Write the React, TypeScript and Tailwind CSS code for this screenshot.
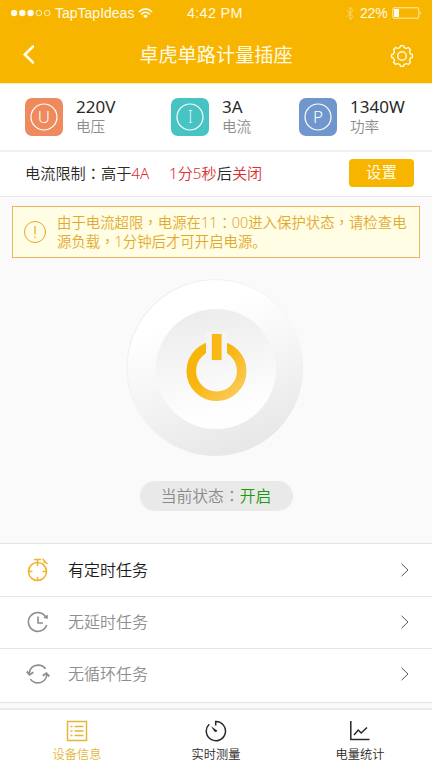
import React from 'react';

interface StatProps {
  letter: string;
  value: string;
  label: string;
  color: string;
  className: string;
}

const Mark: React.FC<{ children: string }> = ({ children }) => (
  <span className="font-['Noto_Sans_CJK_TC',sans-serif]" lang="zh-TW">{children}</span>
);

const StatusBar = () => (
  <div className="flex h-6 items-center pl-[11px] pr-[10px] pt-[2px] font-['Liberation_Sans',sans-serif] text-[#fffbe8]">
    <svg className="h-2 w-10" viewBox="0 0 40 8" fill="none">
      <circle cx="3" cy="4" r="3.2" fill="currentColor" />
      <circle cx="11.3" cy="4" r="3.2" fill="currentColor" />
      <circle cx="19.6" cy="4" r="3.2" fill="currentColor" />
      <circle cx="27.9" cy="4" r="2.8" stroke="currentColor" strokeWidth="0.8" />
      <circle cx="36.2" cy="4" r="2.8" stroke="currentColor" strokeWidth="0.8" />
    </svg>
    <span className="ml-[4px] w-[81px] whitespace-nowrap text-[14px] leading-5">TapTapIdeas</span>
    <svg className="ml-[2px] h-[11px] w-[15px]" viewBox="0 0 15 11" fill="none" stroke="currentColor" strokeWidth="1.5">
      <path d="M.8 4Q7.5-2.3 14.2 4M3.1 6.4Q7.5 2.2 11.9 6.4" />
      <path d="M7.5 10.3 5.1 7.9Q7.5 5.8 9.9 7.9Z" fill="currentColor" stroke="none" />
    </svg>
    <span className="ml-[34px] whitespace-nowrap text-[14.4px] leading-5 tracking-[0.3px]">4:42 PM</span>
    <div className="ml-auto flex items-center">
      <svg className="h-[15px] w-2 opacity-50" viewBox="0 0 8 15" fill="none" stroke="currentColor">
        <path d="M.5 4 7 10.5 4 13.8V1.2L7 4.5.5 11" />
      </svg>
      <span className="ml-[6px] w-[32px] whitespace-nowrap text-[14px] leading-5 tracking-[-0.2px]">22%</span>
      <svg className="h-3 w-[30px]" viewBox="0 0 30 12" fill="none">
        <rect x=".8" y=".8" width="26" height="10.4" rx="1" stroke="currentColor" strokeWidth=".8" />
        <rect x="2" y="2" width="5" height="8" fill="currentColor" />
        <path d="M28 4.2q1.8 1.8 0 3.6z" fill="currentColor" />
      </svg>
    </div>
  </div>
);

const Gear = () => (
  <svg className="h-6 w-6" viewBox="0 0 24 24" fill="none" stroke="currentColor" strokeWidth="1.4" strokeLinejoin="round">
    <path d="M9.7 3.6c.5-.2.6-1 .8-2h3c.2 1 .3 1.8.8 2 .8.3 1.3.5 2 .8.5.2 1.2-.3 2-.9l2.2 2.2c-.6.8-1.1 1.5-.9 2 .3.7.5 1.2.8 2 .2.5 1 .6 2 .8v3c-1 .2-1.8.3-2 .8-.3.8-.5 1.3-.8 2-.2.5.3 1.2.9 2l-2.2 2.2c-.8-.6-1.5-1.1-2-.9-.7.3-1.2.5-2 .8-.5.2-.6 1-.8 2h-3c-.2-1-.3-1.8-.8-2-.8-.3-1.3-.5-2-.8-.5-.2-1.2.3-2 .9l-2.2-2.2c.6-.8 1.1-1.5.9-2-.3-.7-.5-1.2-.8-2-.2-.5-1-.6-2-.8v-3c1-.2 1.8-.3 2-.8.3-.8.5-1.3.8-2 .2-.5-.3-1.2-.9-2l2.2-2.2c.8.6 1.5 1.1 2 .9.7-.3 1.2-.5 2-.8Z" />
    <circle cx="12" cy="12" r="4.3" />
  </svg>
);

const Stat: React.FC<StatProps> = ({ letter, value, label, color, className }) => (
  <div className={`flex items-center ${className}`}>
    <div className={`flex h-[38px] w-[38px] items-center justify-center rounded-[7px] text-white ${color}`}>
      <svg className="h-7 w-7" viewBox="0 0 28 28" fill="none" stroke="currentColor">
        <circle cx="14" cy="14" r="13" strokeWidth="1.2" />
        {letter === 'I' ? (
          <text x="14.5" y="20" textAnchor="middle" fill="currentColor" stroke="none" className="font-['Noto_Sans',sans-serif] text-[18px] font-extralight">
            I
          </text>
        ) : (
          <text x="14" y="20" textAnchor="middle" fill="currentColor" stroke="none" className="font-['Noto_Sans',sans-serif] text-[17px] font-light">
            {letter}
          </text>
        )}
      </svg>
    </div>
    <div className="-mt-[2px] ml-[13px] whitespace-nowrap">
      <div className="text-[17px] leading-5 font-normal text-[#2a2a2a]">{value}</div>
      <div className="text-[14.6px] leading-[18px] text-[#8c8c8c]">{label}</div>
    </div>
  </div>
);

const PowerButton = () => (
  <svg className="h-[182px] w-[182px]" viewBox="0 0 182 182" fill="none">
    <defs>
      <linearGradient id="rim" x1="0.32" y1="0" x2="0.68" y2="1">
        <stop offset="0.2" stopColor="#ffffff" />
        <stop offset="1" stopColor="#e6e6e6" />
      </linearGradient>
      <linearGradient id="face" x1="0.4" y1="0" x2="0.6" y2="1">
        <stop offset="0" stopColor="#ececec" />
        <stop offset="0.85" stopColor="#fefefe" />
      </linearGradient>
      <linearGradient id="edge" x1="0" y1="0" x2="1" y2="1">
        <stop offset="0" stopColor="#ececec" />
        <stop offset="1" stopColor="#ffffff" />
      </linearGradient>
      <linearGradient id="gold" x1="0" y1="0" x2="1" y2="1">
        <stop offset="0.4" stopColor="#f8b50c" />
        <stop offset="1" stopColor="#fbcd60" />
      </linearGradient>
    </defs>
    <circle cx="90.5" cy="91" r="88.5" fill="url(#rim)" stroke="url(#edge)" strokeWidth="1.2" />
    <circle cx="91" cy="92" r="60" fill="url(#face)" />
    <circle cx="91.5" cy="94" r="25.2" stroke="url(#gold)" strokeWidth="9.6" />
    <path d="M81 55h21v32H81z" fill="#f4f4f4" />
    <path d="M86.8 57h9.8v26h-9.8z" fill="#f9b816" />
  </svg>
);

const TimerIcon = () => (
  <svg className="h-6 w-6 text-[#f1b42f]" viewBox="0 0 24 24" fill="none" stroke="currentColor" strokeWidth="1.6">
    <circle cx="11.5" cy="13.5" r="9" />
    <path d="M8 1.5h7M11.5 2v6M16.5 1l5 5M19.5 3l-2 2M11.500 19v4M2.500 13.500h4M16.500 13.500h4" />
  </svg>
);

const DelayIcon = () => (
  <svg className="h-6 w-6" viewBox="0 0 24 24" fill="none" stroke="currentColor" strokeWidth="1.6">
    <path d="M19.6 6.7A9.4 9.4 0 1 0 20.7 15M12 6.5V13h5" />
    <path d="m21.7 4.5.2 4.2-4.7-.8z" fill="currentColor" stroke="none" />
  </svg>
);

const LoopIcon = () => (
  <svg className="h-6 w-6" viewBox="0 0 24 24" fill="none" stroke="currentColor" strokeWidth="1.6">
    <path d="M3.2 11.5C3.5 6.5 7 3.1 12 3.1c3.3 0 5.9 1.3 7.6 3.8M20.8 12.5c-.3 4.8-3.9 8.4-8.8 8.4-3.3 0-5.9-1.3-7.6-3.8" />
    <path d="m.8 9.5 2.8 3.2 3.7-2.4M23.2 14.5l-2.800-3.200-3.700 2.400" strokeWidth="1.9" />
  </svg>
);

const tasks = [
  { label: '有定时任务', icon: <TimerIcon />, row: 'h-[53px] border-t border-[#e4e4e4] text-[#1b1b1b]' },
  { label: '无延时任务', icon: <DelayIcon />, row: 'h-[52px] border-t border-[#e4e4e4] text-[#8e8e8e] pb-[2px]' },
  { label: '无循环任务', icon: <LoopIcon />, row: 'h-[55px] border-y border-[#e4e4e4] text-[#8e8e8e] pb-[4px]' },
];

const tabs = [
  {
    label: '设备信息',
    tab: 'text-[#e3b637] pl-[10px]',
    icon: (
      <svg className="h-[22px] w-[22px]" viewBox="0 0 22 22" fill="none" stroke="currentColor" strokeWidth="1.5">
        <path d="M1.5 1.5h19v19h-19zM4.5 6.5h2M8.5 6.5h9M4.5 11h2M8.5 11h9M4.5 15.5h2M8.5 15.5h9" />
      </svg>
    ),
  },
  {
    label: '实时测量',
    tab: 'text-[#292929]',
    icon: (
      <svg className="h-[22px] w-[22px]" viewBox="0 0 22 22" fill="none" stroke="currentColor" strokeWidth="1.5">
        <path d="M10.7 5.5v-4A9.6 9.6 0 1 1 4.2 4.2" />
        <path d="m6 6.2 3.4 5.400q1.800 1.200 3-.8z" fill="currentColor" stroke="none" />
      </svg>
    ),
  },
  {
    label: '电量统计',
    tab: 'text-[#292929]',
    icon: (
      <svg className="h-[22px] w-[22px]" viewBox="0 0 22 22" fill="none" stroke="currentColor" strokeWidth="1.5">
        <path d="M1.8 1v18.500h18.700M5 15l4.200-5 3 3 5.800-5.500" />
      </svg>
    ),
  },
];

export default function App() {
  return (
    <div className="flex h-[768px] w-[432px] flex-col overflow-hidden bg-[#fafafa] font-['Noto_Sans','Noto_Sans_CJK_SC',sans-serif] font-[350]" lang="zh-CN">
      <header className="h-[84px] shrink-0 border-b border-[#fff0bb] bg-[#f8b500] text-[#fffbe8]">
        <StatusBar />
        <div className="flex h-[60px] items-center justify-between pl-[22px] pr-[18px]">
          <svg className="h-5 w-3" viewBox="0 0 12 20" fill="none" stroke="currentColor" strokeWidth="2.6" strokeLinecap="round">
            <path d="M11 2.5 2.8 10.5 11 18.5" />
          </svg>
          <h1 className="ml-[8px] pt-[2px] text-[19.2px] leading-7 font-normal whitespace-nowrap">卓虎单路计量插座</h1>
          <div className="pt-[4px]">
            <Gear />
          </div>
        </div>
      </header>

      <section className="flex h-[68px] shrink-0 border-b-2 border-[#f0f0f0] bg-white pl-[25px]">
        <Stat letter="U" value="220V" label="电压" color="bg-[#ef8a5e]" className="w-[146px]" />
        <Stat letter="I" value="3A" label="电流" color="bg-[#46c3c2]" className="w-[128px]" />
        <Stat letter="P" value="1340W" label="功率" color="bg-[#7097cd]" className="" />
      </section>

      <section className="flex h-[45px] shrink-0 items-center border-b border-[#e9e9ec] bg-white pb-[2px] pl-[25px] pr-[18px] text-[15.2px] whitespace-nowrap text-[#292929]">
        <span className="w-[144px]">
          电流限制<Mark>：</Mark>高于<span className="text-[#d92f30]">4A</span>
        </span>
        <span>
          <span className="text-[#d92f30]">1分5秒</span>后<span className="text-[#d92f30]">关闭</span>
        </span>
        <button className="ml-auto h-7 w-[65px] rounded bg-[#f8b500] text-[15.4px] font-normal text-[#fffbe8]">设置</button>
      </section>

      <section className="flex flex-1 flex-col items-center">
        <div className="mt-[9px] flex h-[52px] w-[408px] items-center border border-[#e5b75a] bg-[#fffde4] pl-[10px] text-[#e3a92c]">
          <svg className="h-6 w-6" viewBox="0 0 24 24" fill="none" stroke="currentColor">
            <circle cx="12" cy="12" r="10.5" />
            <path d="M12 6v8.500M12 16.500v1.500" strokeWidth="1.2" />
          </svg>
          <p className="ml-[10px] text-[14.4px] leading-[18.5px] whitespace-nowrap">
            由于电流超限<Mark>，</Mark>电源在11<Mark>：</Mark>00进入保护状态<Mark>，</Mark>请检查电
            <br />
            源负载<Mark>，</Mark>1分钟后才可开启电源。
          </p>
        </div>
        <div className="mt-[19px]">
          <PowerButton />
        </div>
        <div className="mt-[22px] flex h-[30px] w-[153px] items-center justify-center rounded-full bg-[#e9e9e9] text-[15.8px] whitespace-nowrap text-[#8a8a8a]">
          <span>
            当前状态<Mark>：</Mark><span className="text-[#20990f]">开启</span>
          </span>
        </div>
      </section>

      <ul className="shrink-0">
        {tasks.map((task) => (
          <li key={task.label} className={`flex items-center bg-white pr-[23px] pl-[26px] ${task.row}`}>
            {task.icon}
            <span className="ml-[18px] text-[16px]">{task.label}</span>
            <svg className="ml-auto h-[14px] w-2" viewBox="0 0 8 14" fill="none" stroke="#555">
              <path d="m.5 .8 6.5 6.2-6.5 6.2" />
            </svg>
          </li>
        ))}
      </ul>

      <nav className="mt-[5px] flex h-[60px] shrink-0 border-t-2 border-[#ebebeb] bg-white">
        {tabs.map((item) => (
          <div key={item.label} className={`flex w-1/3 shrink-0 flex-col items-center pt-[10px] ${item.tab}`}>
            {item.icon}
            <span className="mt-[4px] text-[12.2px] leading-[18px]">{item.label}</span>
          </div>
        ))}
      </nav>
    </div>
  );
}
